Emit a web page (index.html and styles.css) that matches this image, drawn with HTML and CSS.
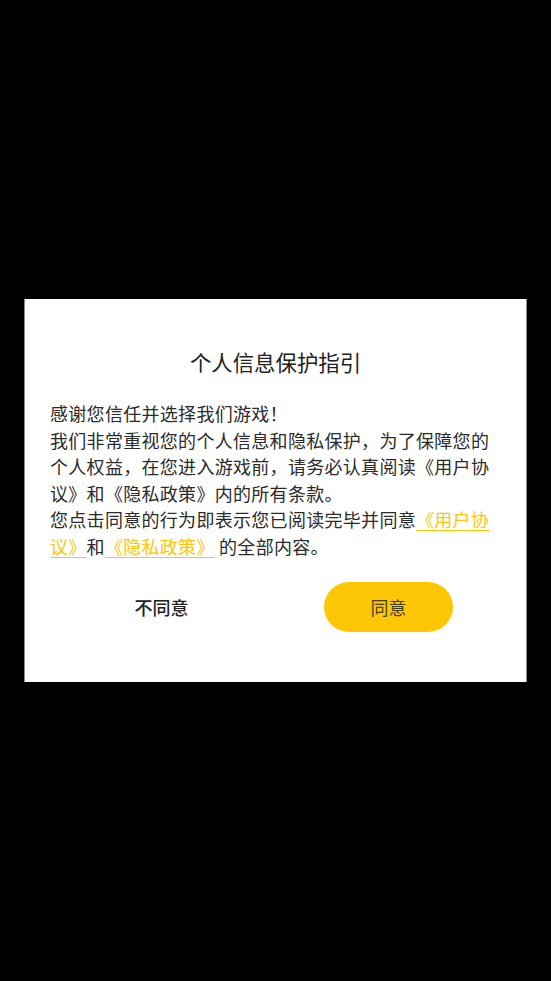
FILE: index.html
```html
<!DOCTYPE html>
<html lang="zh-CN">
<head>
<meta charset="utf-8">
<title>个人信息保护指引</title>
<link rel="stylesheet" href="styles.css">
</head>
<body>
<div class="overlay">
  <div class="dialog">
    <h1 class="title">个人信息保护指引</h1>
    <div class="content">
      <p class="para">感谢您信任并选择我们游戏！</p>
      <p class="para">我们非常重视您的个人信息和隐私保护，为了保障您的个人权益，在您进入游戏前，请务必认真阅读《用户协议》和《隐私政策》内的所有条款。</p>
      <p class="para">您点击同意的行为即表示您已阅读完毕并同意<a class="link" href="#">《用户协议》</a>和<a class="link" href="#">《隐私政策》</a> 的全部内容。</p>
    </div>
    <div class="actions">
      <button class="btn btn-disagree" type="button">不同意</button>
      <button class="btn btn-agree" type="button">同意</button>
    </div>
  </div>
</div>
</body>
</html>
```
FILE: styles.css
```css
html, body {
  margin: 0;
  padding: 0;
  height: 100%;
  background: #000;
}

body {
  font-family: "Noto Sans CJK SC", "Noto Sans", sans-serif;
}

.overlay {
  height: 100%;
  display: flex;
  align-items: center;
  justify-content: center;
}

.dialog {
  width: 503px;
  box-sizing: border-box;
  background: #fff;
  border-left: 1px solid #8c8c8c;
  border-right: 1px solid #8c8c8c;
  padding: 48px 0 50px;
}

.title {
  margin: 0;
  font-size: 21.4px;
  line-height: 30px;
  font-weight: 400;
  color: #222;
  text-align: center;
}

.content {
  margin-top: 23px;
  padding: 0 31px 0 25px;
  font-size: 18px;
  line-height: 26.6px;
  letter-spacing: 0.3px;
  color: #2b2b2b;
}

.para {
  margin: 0;
}

.link {
  color: #fcc60a;
  text-decoration: underline;
  text-decoration-thickness: 1px;
  text-underline-offset: 3px;
}

.actions {
  margin-top: 22.4px;
  padding: 0 73px 0 72px;
  display: flex;
  justify-content: space-between;
}

.btn {
  width: 129px;
  height: 50px;
  border: none;
  border-radius: 25px;
  font-family: inherit;
  font-size: 18px;
  padding: 0;
  cursor: pointer;
}

.btn-disagree {
  background: transparent;
  color: #222;
  font-weight: 500;
}

.btn-agree {
  background: #fdc705;
  color: #4a421f;
  font-weight: 400;
}
```
